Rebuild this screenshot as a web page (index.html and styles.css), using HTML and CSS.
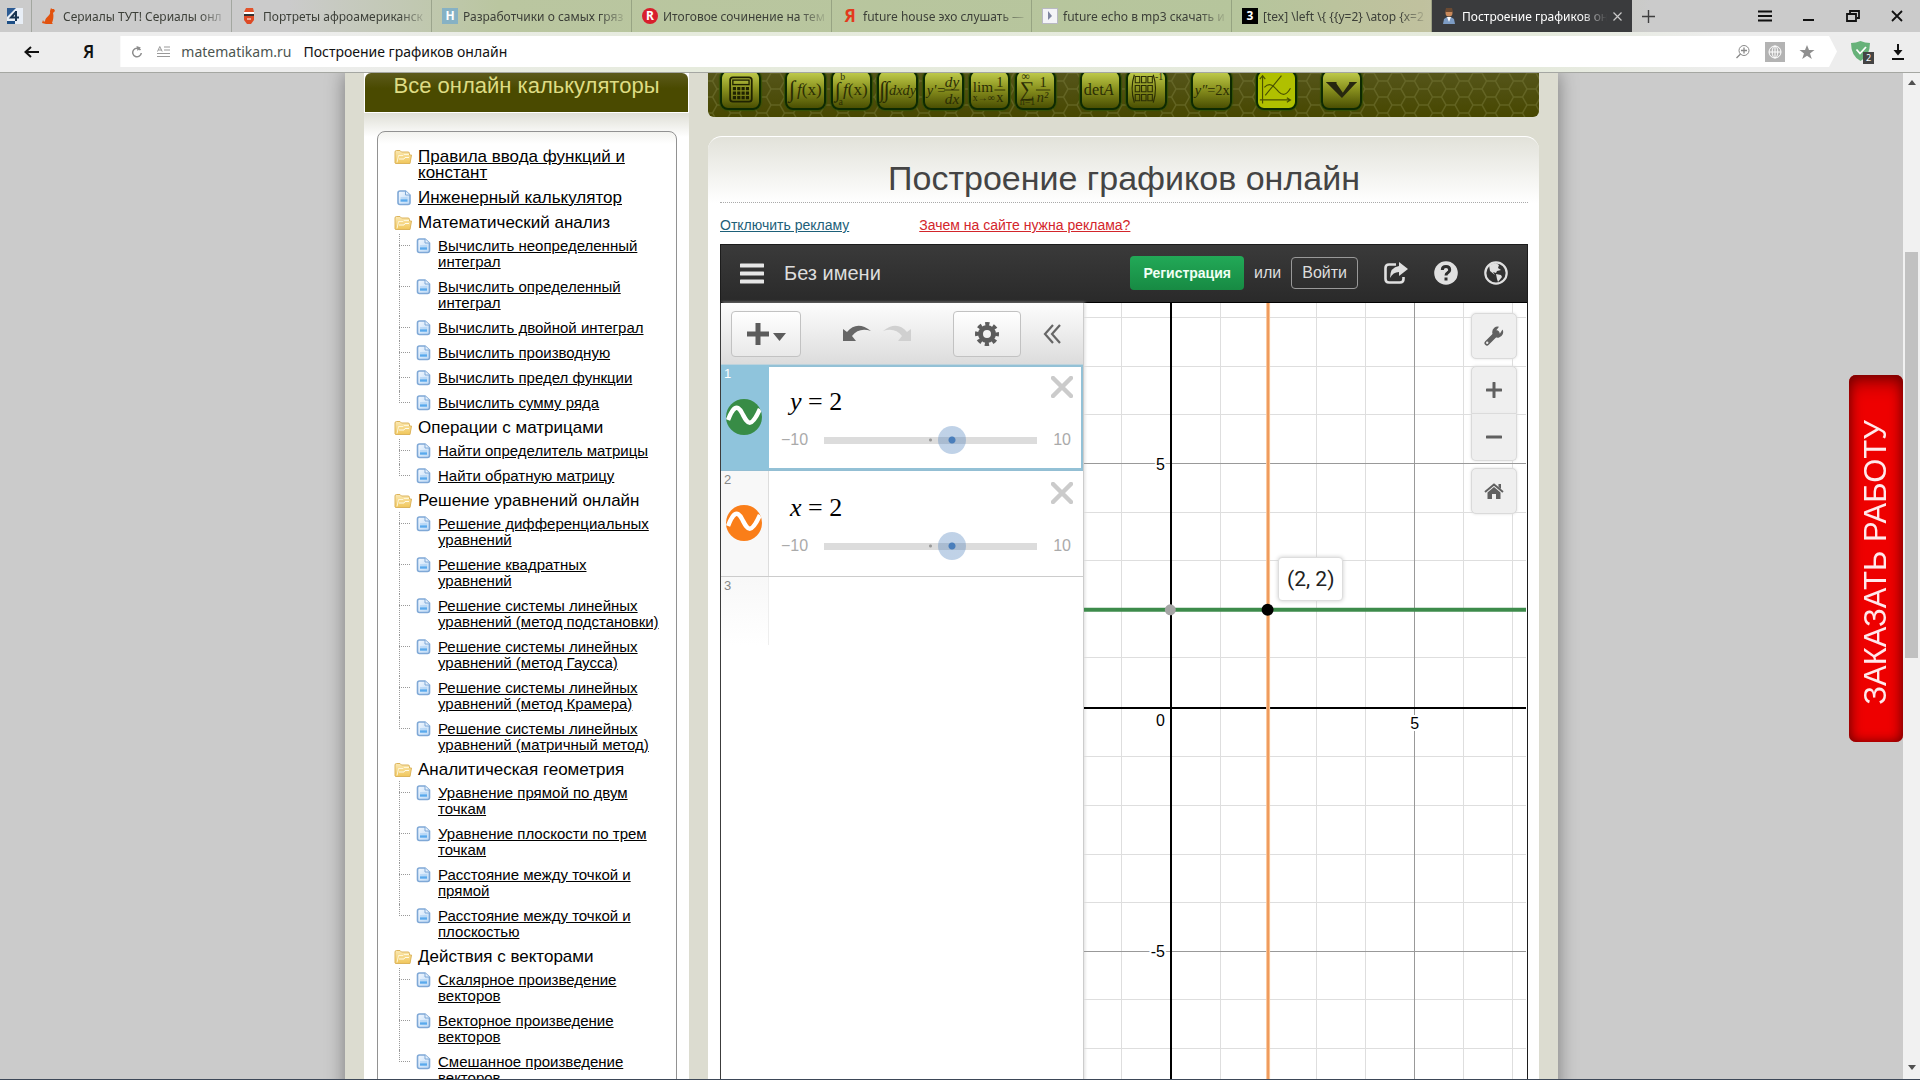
FILE: index.html
```html
<!DOCTYPE html>
<html lang="ru">
<head>
<meta charset="utf-8">
<title>Построение графиков онлайн</title>
<link rel="stylesheet" href="styles.css">
</head>
<body>
<svg class="defs" aria-hidden="true">
  <defs>
    <linearGradient id="gFolder" x1="0" y1="0" x2="0" y2="1"><stop offset="0" stop-color="#fbe9b4"/><stop offset="1" stop-color="#f0c65a"/></linearGradient>
    <linearGradient id="gDoc" x1="0" y1="0" x2="1" y2="1"><stop offset="0" stop-color="#f4f9ff"/><stop offset="1" stop-color="#bcd9f6"/></linearGradient>
    <symbol id="folder" viewBox="0 0 18 16"><path d="M1 14V3q0-1.500 1.500-1.500H6L7.500 3H14q1.500 0 1.500 1.500V6H17.500L16 14.500H1.500z" fill="url(#gFolder)" stroke="#dcb45c"/><path d="M3 13.500 4.500 6.500H9L10 5.500H15" fill="none" stroke="#fff6d8"/><path d="M5 10h5l1-1.500h4" fill="none" stroke="#fffbe9"/></symbol>
    <symbol id="doc" viewBox="0 0 15 16"><path d="M1.500 3q0-2 2-2H9l4.500 4v7.500q0 2-2 2h-8q-2 0-2-2z" fill="url(#gDoc)" stroke="#7fa8d6" stroke-width="1.600"/><path d="M9 1v4h4.500" fill="#e6f1fd" stroke="#7fa8d6"/><path d="M4 10.500h7" stroke="#5aa9ec" stroke-width="2.400"/><path d="M4 8h7" stroke="#9dc9f2"/></symbol>
    <symbol id="cross" viewBox="0 0 22 22"><path d="M2 2 20 20M20 2 2 20" stroke="#cbcbcb" stroke-width="4.500" stroke-linecap="round"/></symbol>
    <symbol id="wave" viewBox="0 0 36 36"><path d="M2 21C7 8 11 5 16 14s8 18 18-4" fill="none" stroke="#fff" stroke-width="4.500"/></symbol>
  </defs>
</svg>

<header class="browser">
  <nav class="tabs">
    <a class="tab pinned" href="#"><svg width="16" height="16" viewBox="0 0 16 16"><rect width="16" height="16" fill="#e8eef6"/><path d="M0 0h9L0 9z" fill="#2c5b93"/><path d="M0 16V13h8v3z" fill="#1d4f86"/><path d="M9 3v10M9 4 4 9.500h8" fill="none" stroke="#17324f" stroke-width="2"/></svg></a>
    <a class="tab" href="#"><svg width="14" height="16" viewBox="0 0 14 16"><path d="M9 0l1 1 2 0 1 2-2 2c1 3 0 8-1 10l1 1H4L0 15l1-3 1 2 1-1C4 8 9 8 8 3z" fill="#e2520e"/></svg><span>Сериалы ТУТ! Сериалы онл</span></a>
    <a class="tab" href="#"><svg width="14" height="16" viewBox="0 0 14 16"><path d="M2 4 4 0h7l1 4z" fill="#e2532b"/><path d="M2 4h10v3H2z" fill="#fff"/><path d="M2 6h10v2H2z" fill="#333"/><path d="M2 8h10v4l-3 4H5l-3-4z" fill="#dd4a25"/><path d="M5 11h4" stroke="#fff"/></svg><span>Портреты афроамериканск</span></a>
    <a class="tab" href="#"><b class="fav habr">H</b><span>Разработчики о самых гряз</span></a>
    <a class="tab" href="#"><b class="fav red">R</b><span>Итоговое сочинение на тем</span></a>
    <a class="tab" href="#"><b class="fav ya">Я</b><span>future house эхо слушать —</span></a>
    <a class="tab" href="#"><svg class="sq" width="16" height="16" viewBox="0 0 16 16"><rect x=".5" y=".5" width="15" height="15" fill="#f4f4f8" stroke="#b9b9c4"/><path d="M6 3l4 5-4 4z" fill="#7f86a0"/></svg><span>future echo в mp3 скачать и</span></a>
    <a class="tab" href="#"><b class="fav three">3</b><span>[tex] \left \{ {{y=2} \atop {x=2</span></a>
    <a class="tab active" href="#"><svg width="14" height="16" viewBox="0 0 14 16"><circle cx="7" cy="5" r="3.500" fill="#c98a5c"/><path d="M3 4 4 0h6l1 4z" fill="#6b4a32"/><path d="M1 16l1-5 3-2h4l3 2 1 5z" fill="#7d9cc4"/><path d="M5 9l2 5 2-5z" fill="#fff"/></svg><span>Построение графиков он</span><svg class="tabx" width="9" height="9" viewBox="0 0 9 9"><path d="M.5.5l8 8M8.500.5l-8 8" stroke="#c9c9c9" stroke-width="1.200"/></svg></a>
    <button class="bare plus" aria-label="Новая вкладка"><svg width="13" height="13" viewBox="0 0 13 13"><path d="M6.500 0v13M0 6.500h13" stroke="#3f3f3f" stroke-width="1.400"/></svg></button>
    <div class="winbtns">
      <button class="bare" aria-label="Меню"><svg width="14" height="12" viewBox="0 0 14 12"><path d="M0 1.500h14M0 6h14M0 10.500h14" stroke="#111" stroke-width="2"/></svg></button>
      <button class="bare" aria-label="Свернуть"><svg width="14" height="12" viewBox="0 0 14 12"><path d="M1 10h11" stroke="#111" stroke-width="2"/></svg></button>
      <button class="bare" aria-label="Развернуть"><svg width="14" height="12" viewBox="0 0 14 12"><path d="M4 3V1h9v7h-2M1 4h9v7H1z" fill="none" stroke="#111" stroke-width="1.800"/></svg></button>
      <button class="bare" aria-label="Закрыть"><svg width="14" height="12" viewBox="0 0 14 12"><path d="M2 1l10 10M12 1 2 11" stroke="#111" stroke-width="1.800"/></svg></button>
    </div>
  </nav>
  <div class="address">
    <button class="bare back" aria-label="Назад"><svg width="15" height="12" viewBox="0 0 15 12"><path d="M15 6H2M7 1 1.500 6 7 11" fill="none" stroke="#111" stroke-width="2"/></svg></button>
    <a class="yandex" href="#">Я</a>
    <div class="omni">
      <svg width="12" height="12" viewBox="0 0 12 12"><path d="M9.500 4A4.300 4.300 0 1 0 10.300 7" fill="none" stroke="#8c8c8c" stroke-width="1.500"/><path d="M5.500 0 9.800 1.500 6.500 5z" fill="#8c8c8c"/></svg>
      <svg width="14" height="12" viewBox="0 0 14 12"><path d="M7 1h6M7 4h6M0 7.500h13M0 10.500h13" stroke="#999"/><path d="M.5 5.500 2.800.5 5.200 5.500M1.500 4h3" fill="none" stroke="#999"/></svg>
      <span class="host">matematikam.ru</span><span class="ptitle">Построение графиков онлайн</span>
      <svg class="push" width="16" height="14" viewBox="0 0 16 14"><circle cx="9" cy="5.500" r="5" fill="none" stroke="#888"/><path d="M5.500 9 1.500 13M9 2.500v6M6 5.500h6" stroke="#888" stroke-width="1.300"/></svg>
      <svg width="20" height="20" viewBox="0 0 20 20"><rect width="20" height="20" fill="#b3b3b3"/><g fill="none" stroke="#fff"><circle cx="10" cy="10" r="6"/><ellipse cx="10" cy="10" rx="2.800" ry="6"/><path d="M4 10h12M10 4v12"/></g></svg>
      <svg width="16" height="14" viewBox="0 0 16 14"><path d="M8 0l2 5h5.500L11 8.500 12.800 14 8 10.800 3.200 14 5 8.500.5 5H6z" fill="#8f8f8f"/></svg>
    </div>
    <div class="shield"><svg width="23" height="21" viewBox="0 0 23 21"><path d="M0 2q5 0 9.500-2Q14 2 19 2q0 13-9.500 18Q0 15 0 2z" fill="#67b279"/><path d="M5.500 8.500 9 12.500 15 6" fill="none" stroke="#fff" stroke-width="1.800"/></svg><span>2</span></div>
    <svg width="12" height="16" viewBox="0 0 12 16"><path d="M6 0v9M0 15h12" stroke="#111" stroke-width="2"/><path d="M1.500 6h9L6 11.500z" fill="#111"/></svg>
  </div>
</header>

<div class="viewport">
<div class="page">
  <div class="site">
    <aside class="side">
      <h2>Все онлайн калькуляторы</h2>
      <div class="sidebody">
      <ul class="tree">
        <li><svg><use href="#folder"/></svg><a href="#">Правила ввода функций и констант</a></li>
        <li><svg class="d"><use href="#doc"/></svg><a href="#">Инженерный калькулятор</a></li>
        <li><svg><use href="#folder"/></svg><span>Математический анализ</span>
          <ul>
            <li><svg><use href="#doc"/></svg><a href="#">Вычислить неопределенный интеграл</a></li>
            <li><svg><use href="#doc"/></svg><a href="#">Вычислить определенный интеграл</a></li>
            <li><svg><use href="#doc"/></svg><a href="#">Вычислить двойной интеграл</a></li>
            <li><svg><use href="#doc"/></svg><a href="#">Вычислить производную</a></li>
            <li><svg><use href="#doc"/></svg><a href="#">Вычислить предел функции</a></li>
            <li><svg><use href="#doc"/></svg><a href="#">Вычислить сумму ряда</a></li>
          </ul></li>
        <li><svg><use href="#folder"/></svg><span>Операции с матрицами</span>
          <ul>
            <li><svg><use href="#doc"/></svg><a href="#">Найти определитель матрицы</a></li>
            <li><svg><use href="#doc"/></svg><a href="#">Найти обратную матрицу</a></li>
          </ul></li>
        <li><svg><use href="#folder"/></svg><span>Решение уравнений онлайн</span>
          <ul>
            <li><svg><use href="#doc"/></svg><a href="#">Решение дифференциальных уравнений</a></li>
            <li><svg><use href="#doc"/></svg><a href="#">Решение квадратных уравнений</a></li>
            <li><svg><use href="#doc"/></svg><a href="#">Решение системы линейных уравнений (метод подстановки)</a></li>
            <li><svg><use href="#doc"/></svg><a href="#">Решение системы линейных уравнений (метод Гаусса)</a></li>
            <li><svg><use href="#doc"/></svg><a href="#">Решение системы линейных уравнений (метод Крамера)</a></li>
            <li><svg><use href="#doc"/></svg><a href="#">Решение системы линейных уравнений (матричный метод)</a></li>
          </ul></li>
        <li><svg><use href="#folder"/></svg><span>Аналитическая геометрия</span>
          <ul>
            <li><svg><use href="#doc"/></svg><a href="#">Уравнение прямой по двум точкам</a></li>
            <li><svg><use href="#doc"/></svg><a href="#">Уравнение плоскости по трем точкам</a></li>
            <li><svg><use href="#doc"/></svg><a href="#">Расстояние между точкой и прямой</a></li>
            <li><svg><use href="#doc"/></svg><a href="#">Расстояние между точкой и плоскостью</a></li>
          </ul></li>
        <li><svg><use href="#folder"/></svg><span>Действия с векторами</span>
          <ul>
            <li><svg><use href="#doc"/></svg><a href="#">Скалярное произведение векторов</a></li>
            <li><svg><use href="#doc"/></svg><a href="#">Векторное произведение векторов</a></li>
            <li><svg><use href="#doc"/></svg><a href="#">Смешанное произведение векторов</a></li>
          </ul></li>
      </ul>
      </div>
    </aside>

    <main class="main">
      <nav class="calcbar">
        <div class="grp"><a href="#" aria-label="Калькулятор"><svg viewBox="0 0 41 40"><rect x="9" y="6" width="24" height="27" rx="3" fill="none" stroke="#1f2200" stroke-width="2"/><rect x="12" y="9" width="18" height="5" fill="none" stroke="#1f2200" stroke-width="1.500"/><path d="M12 18.500h18M12 23.500h18M12 28.500h18" stroke="#1f2200" stroke-width="3.500" stroke-dasharray="3.500 1.330"/></svg></a></div>
        <div class="grp">
          <a href="#"><svg viewBox="0 0 41 40"><text x="2" y="28" font-size="26">∫</text><text x="11" y="26" font-size="19"><tspan class="i">f</tspan>(x)</text></svg></a>
          <a href="#"><svg viewBox="0 0 41 40"><text x="2" y="28" font-size="24">∫</text><text x="11" y="26" font-size="19"><tspan class="i">f</tspan>(x)</text><text x="8" y="9" font-size="11">b</text><text x="6" y="37" font-size="11">a</text></svg></a>
          <a href="#"><svg viewBox="0 0 41 40"><text x="0" y="28" font-size="25">∫</text><text x="5" y="28" font-size="25">∫</text><text class="i" x="11" y="26" font-size="16">dxdy</text></svg></a>
          <a href="#"><svg viewBox="0 0 41 40"><text class="i" x="2" y="25" font-size="16">y'=</text><text class="i" x="22" y="17" font-size="17">dy</text><text class="i" x="22" y="35" font-size="17">dx</text><path d="M21 20h17" stroke="#2b2e04"/></svg></a>
          <a href="#"><svg viewBox="0 0 41 40"><text x="2" y="22" font-size="17">lim</text><text x="2" y="32" font-size="11">x→∞</text><text x="28" y="17" font-size="16">1</text><text x="28" y="33" font-size="16">x</text><path d="M26 20h12" stroke="#2b2e04"/></svg></a>
          <a href="#"><svg viewBox="0 0 41 40"><text x="3" y="27" font-size="23">∑</text><text x="5" y="9" font-size="13">∞</text><text x="3" y="37" font-size="11">n=1</text><text x="25" y="17" font-size="16">1</text><text class="i" x="22" y="33" font-size="16">n²</text><path d="M21 20h16" stroke="#2b2e04"/></svg></a>
        </div>
        <div class="grp">
          <a href="#"><svg viewBox="0 0 41 40"><text x="2" y="26" font-size="18">det<tspan class="i">A</tspan></text></svg></a>
          <a href="#"><svg viewBox="0 0 41 40"><path d="M7 3q-5 15 0 31M28 3q5 15 0 31" fill="none" stroke="#2b2e04" stroke-width="1.300"/><g fill="none" stroke="#2b2e04" stroke-width="1.200"><path d="M8 5h5v7H8zM15 5h5v7h-5zM22 5h5v7h-5zM8 15h5v7H8zM15 15h5v7h-5zM22 15h5v7h-5zM8 25h5v7H8zM15 25h5v7h-5zM22 25h5v7h-5z"/></g><text x="30" y="9" font-size="11">-1</text></svg></a>
        </div>
        <div class="grp"><a href="#"><svg viewBox="0 0 41 40"><text x="2" y="26" font-size="16"><tspan class="i">y″</tspan>=2x</text></svg></a></div>
        <div class="grp"><a class="on" href="#" aria-label="Графики"><svg viewBox="0 0 41 40"><path d="M5 35V4M2 31h34M2 8l3-4 3 4M32 28.500l4 2.500-4 2.500M7 17c7-7 11 0 16 5s9 3 13-4M8 26 26 4" fill="none" stroke="#4a5200" stroke-width="1.300"/></svg></a></div>
        <div class="grp"><a href="#" aria-label="Ещё"><svg viewBox="0 0 41 40"><path d="M3 11h12v2l7 10 7-10v-2h9L35 14 21 29 6 14z" fill="#27270f"/></svg></a></div>
      </nav>

      <section class="panel">
        <h1>Построение графиков онлайн</h1>
        <p class="ads"><a class="off" href="#">Отключить рекламу</a><a class="why" href="#">Зачем на сайте нужна реклама?</a></p>

        <div class="desmos">
          <header class="dhead">
            <button class="bare" aria-label="Меню"><svg width="24" height="21" viewBox="0 0 24 21"><path d="M1 2.500h22M1 10.500h22M1 18.500h22" stroke="#e6e6e6" stroke-width="4" stroke-linecap="round"/></svg></button>
            <span class="name">Без имени</span>
            <button class="reg">Регистрация</button>
            <span class="or">или</span>
            <button class="login">Войти</button>
            <div class="dicons">
            <button class="bare" aria-label="Поделиться"><svg width="24" height="22" viewBox="0 0 24 22"><path d="M12 2.500H5q-3.500 0-3.500 3.500v11q0 3.500 3.500 3.500h11q3.500 0 3.500-3.500V15" fill="none" stroke="#e0e0e0" stroke-width="2.600"/><path d="M15 0l9 7-9 7V10q-6 0-9 6 0-11 9-12z" fill="#e0e0e0"/></svg></button>
            <button class="bare" aria-label="Справка"><svg width="24" height="24" viewBox="0 0 24 24"><circle cx="12" cy="12" r="11.800" fill="#e0e0e0"/><path d="M8.300 9q0-3.500 3.700-3.500T15.700 9q0 1.500-2 2.800Q12 12.800 12 14.500M12 16.500v3" fill="none" stroke="#2e2e2e" stroke-width="3"/></svg></button>
            <button class="bare" aria-label="Язык"><svg width="24" height="24" viewBox="0 0 24 24"><circle cx="12" cy="12" r="10.700" fill="none" stroke="#e0e0e0" stroke-width="2.200"/><path d="M5 4l7-2 3 2-1 3 3 2-4 1-1 2-3-1 2 3-5-4zM12 13l5 1 1 2-4 5-1-3z" fill="#e0e0e0"/></svg></button>
            </div>
          </header>
          <div class="dbody">
            <div class="exprs">
              <div class="etools">
                <button class="box add" aria-label="Добавить"><svg width="40" height="24" viewBox="0 0 40 24"><path d="M12 1v22M1 12h22" stroke="#5c5c5c" stroke-width="5"/><path d="M27 11h13l-6.500 8z" fill="#5c5c5c"/></svg></button>
                <div class="history">
                <button class="bare" aria-label="Отменить"><svg width="28" height="18" viewBox="0 0 28 18"><path d="M0 4l4 3Q14-5 28 6 16 2 9 11l4 5H0z" fill="#666"/></svg></button>
                <button class="bare" aria-label="Повторить"><svg width="28" height="18" viewBox="0 0 28 18"><path d="M28 4l-4 3Q14-5 0 6 12 2 19 11l-4 5h13z" fill="#d0d0d0"/></svg></button>
                </div>
                <button class="box gear" aria-label="Настройки"><svg width="24" height="24" viewBox="0 0 24 24"><circle cx="12" cy="12" r="6.500" fill="none" stroke="#5c5c5c" stroke-width="5"/><circle cx="12" cy="12" r="10" fill="none" stroke="#5c5c5c" stroke-width="4" stroke-dasharray="4.200 3.654" stroke-dashoffset="2.100"/></svg></button>
                <button class="bare" aria-label="Скрыть"><svg width="18" height="20" viewBox="0 0 18 20"><path d="M10 1 2 10l8 9M17 1 9 10l8 9" fill="none" stroke="#666" stroke-width="2.200"/></svg></button>
              </div>
              <div class="expr sel">
                <div class="num">1<button class="bare dot green" aria-label="Показать y"><svg width="36" height="36"><use href="#wave"/></svg></button></div>
                <div class="cell">
                  <div class="eq"><span><i>y</i> = 2</span><button class="bare" aria-label="Удалить"><svg width="22" height="22"><use href="#cross"/></svg></button></div>
                  <label class="slide"><span>−10</span><input type="range" min="-10" max="10" value="2" aria-label="y"><span>10</span></label>
                </div>
              </div>
              <div class="expr">
                <div class="num">2<button class="bare dot orange" aria-label="Показать x"><svg width="36" height="36"><use href="#wave"/></svg></button></div>
                <div class="cell">
                  <div class="eq"><span><i>x</i> = 2</span><button class="bare" aria-label="Удалить"><svg width="22" height="22"><use href="#cross"/></svg></button></div>
                  <label class="slide"><span>−10</span><input type="range" min="-10" max="10" value="2" aria-label="x"><span>10</span></label>
                </div>
              </div>
              <div class="expr next"><div class="num">3</div></div>
            </div>
            <div class="graph">
              <svg viewBox="1084 303 443 780">
                <g fill="none" stroke-width="1" shape-rendering="crispEdges">
                  <path stroke="#dedede" d="M1121.500 303v780M1220.500 303v780M1317.500 303v780M1366.500 303v780M1464.500 303v780M1513.500 303v780M1084 317.500h443M1084 366.500h443M1084 414.500h443M1084 512.500h443M1084 561.500h443M1084 658.500h443M1084 757.500h443M1084 806.500h443M1084 855.500h443M1084 903.500h443M1084 1001.500h443M1084 1050.500h443"/>
                  <path stroke="#999" d="M1415.500 303v780M1084 463.500h443M1084 952.500h443"/>
                  <path stroke="#000" stroke-width="2" d="M1171 303v780M1084 709h443"/>
                </g>
                <g class="labels"><text x="1165" y="470">5</text><text x="1165" y="727">0</text><text x="1420" y="730">5</text><text x="1165" y="958">-5</text></g>
                <path d="M1268.500 303v780" stroke="#fbc79a" stroke-width="4"/><path d="M1268.500 303v780" stroke="#ee9a5c" stroke-width="2"/>
                <path d="M1084 610.500h443" stroke="#3d8b4b" stroke-width="4"/>
                <circle cx="1170.500" cy="610.500" r="5.500" fill="#a5a5a5"/><circle cx="1268" cy="610.500" r="6" fill="#000"/>
              </svg>
              <output class="coord">(2, 2)</output>
              <div class="gtools">
                <button aria-label="Параметры графика"><svg width="20" height="20" viewBox="0 0 20 20"><path d="M3 17 13 7" stroke="#606060" stroke-width="5" stroke-linecap="round"/><path d="M18.500 3.500A5.500 5.500 0 1 1 15 .8L12.500 4l.5 3 3 .5z" fill="#606060"/><circle cx="3.200" cy="16.800" r="1.200" fill="#eee"/></svg></button>
                <div class="zoom"><button aria-label="Увеличить"><svg width="16" height="16" viewBox="0 0 16 16"><path d="M8 1v14M1 8h14" stroke="#606060" stroke-width="3" stroke-linecap="round"/></svg></button><button aria-label="Уменьшить"><svg width="16" height="16" viewBox="0 0 16 16"><path d="M1 8h14" stroke="#606060" stroke-width="3" stroke-linecap="round"/></svg></button></div>
                <button aria-label="Исходный вид"><svg width="20" height="17" viewBox="0 0 20 17"><path d="M1 9 10 1.500 19 9" fill="none" stroke="#606060" stroke-width="2"/><path d="M14.500 1H17v5l-2.500-2zM3.500 9.500 10 4l6.500 5.500V16H12v-5H8v5H3.500z" fill="#606060"/></svg></button>
              </div>
            </div>
          </div>
        </div>
      </section>
    </main>
  </div>
  <a class="order" href="#"><span>ЗАКАЗАТЬ РАБОТУ</span></a>
</div>
<div class="scroll" aria-hidden="true"><i class="up"></i><i class="thumb"></i><i class="down"></i></div>
</div>
</body>
</html>
```
FILE: styles.css
```css
* { box-sizing: border-box; }
body { margin: 0; height: 100vh; display: flex; flex-direction: column; overflow: hidden; font-family: "Liberation Sans", Arial, sans-serif; border-bottom: 1px solid #3d4858; }
.defs { position: absolute; width: 0; height: 0; }
svg { display: block; flex: none; }
.bare { padding: 0; border: 0; background: none; display: block; }

/* browser chrome */
.browser { flex: none; font-family: "Noto Sans", "Open Sans", sans-serif; border-bottom: 1px solid #a5a7a2; background: linear-gradient(90deg, #ededed 15%, #e6ebdd 35%, #e5eadc 80%, #ededed 90%); }
.tabs { display: flex; height: 32px; background: linear-gradient(90deg, #cbcbcb 15%, #bac6a0 26%, #b6c59c 65%, #c0c19e 74%, #cbcbcb 86%); }
.tab { flex: 0 1 200px; min-width: 0; display: flex; align-items: center; gap: 7px; padding: 0 2px 0 10px; border-right: 1px solid rgba(90, 100, 80, .35); color: #3c3f38; font-size: 12px; text-decoration: none; }
.tab.pinned { flex: 0 0 32px; padding: 0 7px; }
.tab > span { flex: 1; overflow: hidden; white-space: nowrap; mask-image: linear-gradient(90deg, #000 82%, transparent); }
.tab.active { padding-right: 10px; background: #3a3b3d; color: #fff; border: 0; gap: 6px; }
.fav { width: 16px; height: 16px; margin-right: -2px; font-size: 12px; line-height: 16px; text-align: center; color: #fff; }
.sq { margin-right: -2px; }
.habr { background: #86b1c4; }
.red { background: #d81e2c; border-radius: 8px; }
.ya { color: #e3391c; font-size: 17px; }
.three { background: #000; }
.plus { margin: 0 10px; }
.winbtns { display: flex; align-items: center; gap: 30px; margin-left: auto; padding-right: 16px; }
.address { display: flex; align-items: center; height: 40px; padding: 0 16px 1px 24px; }
.yandex { margin: 0 26px 0 44px; color: #111; font-size: 17px; font-weight: 600; text-decoration: none; }
.omni { flex: 1; display: flex; align-items: center; height: 31px; margin-right: 14px; padding: 0 22px 0 11px; gap: 14px; background: #fff; clip-path: polygon(0 0, calc(100% - 8px) 0, 100% 50%, calc(100% - 8px) 100%, 0 100%); font-size: 14px; }
.host { margin: 0 -2px 0 -4px; color: #4c5550; }
.ptitle { color: #111; }
.omni .push { margin-left: auto; }
.shield { position: relative; margin-right: 18px; }
.shield span { position: absolute; right: 0; bottom: -2px; width: 11px; height: 12px; background: #444; color: #fff; font-size: 9px; line-height: 12px; text-align: center; }

/* page */
.viewport { flex: 1; min-height: 0; display: flex; }
.page { flex: 1; position: relative; overflow: hidden; background: #cbcbcb; }
.site { width: 100%; max-width: 1213px; min-height: 100%; margin: 0 auto; padding: 0 19px; display: flex; gap: 19px; background: #dcdcd0; box-shadow: 0 0 18px rgba(0, 0, 0, .4); }
.side { flex: 0 0 325px; background: #fff; }
.side h2 { margin: 0 1px; height: 39px; padding-bottom: 13px; border-radius: 6px 6px 0 0; background: linear-gradient(#5c5a1c, #4a4a00 40%); color: #dedc84; font-size: 22px; line-height: 26px; font-weight: 400; text-align: center; }
.sidebody { padding: 18px 12px 0 13px; border-top: 1px solid #fff; background: linear-gradient(#dfdfd6, #fff 24px); }
.tree { margin: 0; padding: 17px 14px 20px 16px; border: 1px solid #929292; border-radius: 8px; background: linear-gradient(#f3f3ef, #fff 12px); font-size: 17px; line-height: 16px; list-style: none; }
.tree a { color: #000; }
.tree > li { display: grid; grid-template-columns: 24px 1fr; margin-bottom: 9px; }
.tree > li > svg { width: 18px; height: 16px; }
.tree > li > svg.d { margin-left: 1px; }
.tree ul { grid-column: 1 / -1; margin: 7px 0 0 5px; padding: 0; list-style: none; font-size: 15px; }
.tree ul li { position: relative; display: flex; gap: 7px; padding: 0 0 9px 17px; }
.tree ul svg { width: 15px; height: 16px; }
.tree ul li::before { content: ""; position: absolute; left: 0; top: -4px; bottom: 4px; border-left: 1px dotted #999; }
.tree ul li::after { content: ""; position: absolute; left: 0; top: 7px; width: 11px; border-top: 1px dotted #999; }
.tree ul li:last-child { padding-bottom: 0; }
.tree ul li:last-child::before { bottom: auto; height: 12px; }

.main { flex: 1; min-width: 0; display: flex; flex-direction: column; }
.calcbar { display: flex; align-items: flex-end; gap: 24px; height: 44px; padding: 0 12px 7px; overflow: hidden; border-radius: 0 0 6px 6px; background: url("data:image/svg+xml,%3Csvg xmlns='http://www.w3.org/2000/svg' width='27' height='16'%3E%3Cpath d='M0 8h4.500L9 0h9l4.500 8H27M4.500 8 9 16h9l4.500-8' fill='none' stroke='%23777a3a' stroke-opacity='.5' stroke-width='1.500'/%3E%3C/svg%3E"), linear-gradient(#55551a, #474700); }
.grp { display: flex; gap: 5px; }
.grp a { width: 41px; height: 40px; border: 2px solid #0d2a02; border-radius: 8px; background: linear-gradient(#c0cc4c, #8c9420 45%, #4a4e02); box-shadow: 0 0 1px 1px #355006; }
.grp a.on { background: #b0c000; }
.grp svg { width: 37px; height: 36px; }
.grp text { font-family: "Liberation Serif", "DejaVu Serif", serif; fill: #2b2e04; }
.grp .i { font-style: italic; }

.panel { flex: 1; margin-top: 19px; padding: 0 11px 0 12px; border-top: 1px solid #fff; border-radius: 14px 14px 0 0; background: linear-gradient(#e2e2da, #fff 66px); }
h1 { margin: 0; padding: 18px 0 1px; border-bottom: 1px dotted #aaa; color: #444; font-size: 34px; line-height: 46px; font-weight: 400; text-align: center; }
.ads { display: flex; gap: 70px; margin: 0; padding: 14px 0 10px; font-size: 14px; line-height: 17px; }
.off { color: #1d6079; }
.why { color: #d3252b; }

/* graphing calculator */
.desmos { border: solid #1c1c1c; border-width: 1px 1px 0; background: #fff; }
.dhead { display: flex; align-items: center; height: 58px; padding: 0 19px 1px; background: linear-gradient(#3a3a3a, #2a2a2a); border-bottom: 1px solid #000; color: #ddd; font-size: 16px; }
.name { margin: 0 auto 0 20px; font-size: 20px; }
.reg, .login { border-radius: 4px; font: inherit; }
.reg { height: 34px; padding: 0 13px; border: 0; background: linear-gradient(#22a957, #178a43); color: #f0fff4; font-size: 14px; font-weight: 700; }
.or { margin: 0 10px; }
.login { height: 32px; padding: 0 10px; border: 1px solid #999; background: none; color: #ddd; }
.dicons { display: flex; align-items: center; gap: 26px; margin-left: 26px; }
.dbody { display: flex; }
.exprs { flex: 0 0 363px; border-right: 1px solid #ccc; box-shadow: 1px 0 3px #ddd; }
.etools { display: flex; align-items: center; justify-content: space-between; height: 62px; padding: 0 22px 0 10px; border-bottom: 1px solid #bdd3dd; background: linear-gradient(#fdfdfd, #dcdcdc); }
.box { display: grid; place-items: center; width: 68px; height: 46px; padding: 0; border: 1px solid #c2c2c2; border-radius: 4px; background: linear-gradient(#fff, #e9e9e9); }
.add { width: 70px; }
.history { display: flex; gap: 12px; margin: 0 20px; }
.expr { display: flex; height: 106px; border-bottom: 1px solid #ccc; }
.num { width: 48px; flex: none; padding: 1px 5px 0 3px; background: #f8f8f8; border-right: 1px solid #ddd; color: #888; font-size: 13px; line-height: 15px; }
.dot { width: 36px; height: 36px; margin: 18px 0 0 2px; border-radius: 50%; overflow: hidden; }
.green { background: #388c46; }
.orange { background: #fa7e19; }
.sel { border-color: #93bed3; }
.sel .num { background: #8fc4dc; border-color: #8fc4dc; color: #fff; }
.cell { flex: 1; padding: 8px 10px 0 12px; }
.sel .cell { border: 2px solid #93c1d6; border-left: 0; padding: 6px 8px 0 12px; }
.eq { display: flex; justify-content: space-between; align-items: flex-start; height: 53px; padding-left: 9px; font-family: "Liberation Serif", "Times New Roman", serif; font-size: 26px; line-height: 58px; }
.eq button { margin-top: 3px; }
.slide { display: flex; align-items: center; justify-content: space-between; height: 28px; padding-right: 2px; color: #aaa; font-size: 16px; }
.slide input { appearance: none; width: 241px; height: 28px; margin: 0 -14px; background: radial-gradient(circle at 50% 50%, #999 1px, transparent 2px), linear-gradient(#dcdcdc, #dcdcdc) center / 213px 7px no-repeat; }
.slide input::-webkit-slider-thumb { appearance: none; width: 28px; height: 28px; border-radius: 50%; background: radial-gradient(circle, #4a7ebb 3px, rgba(74, 126, 187, .35) 4px); }
.next { border: 0; }
.next .num { height: 68px; background: linear-gradient(#f8f8f8, #fff); border-right: 1px solid #eee; }
.graph { flex: 1; position: relative; min-width: 0; padding-right: 1px; }
.graph > svg { width: 100%; height: auto; }
.labels text { font-size: 16px; text-anchor: end; fill: #000; stroke: #fff; stroke-width: 4px; paint-order: stroke; }
.coord { position: absolute; left: 194px; top: 254px; padding: 0 8px; border: 1px solid #ddd; border-radius: 4px; background: #fff; box-shadow: 0 0 4px #ccc; color: #222; font-family: Roboto, sans-serif; font-size: 21px; line-height: 42px; }
.gtools { position: absolute; right: 10px; top: 10px; display: grid; gap: 7px; }
.gtools button { display: grid; place-items: center; width: 46px; height: 46px; padding: 0; border: 1px solid #dadada; border-radius: 5px; background: #efefef; box-shadow: 0 0 3px #ddd; }
.zoom button:first-child { height: 48px; border-radius: 5px 5px 0 0; }
.zoom button:last-child { height: 47px; border-top: 0; border-radius: 0 0 5px 5px; }

.order { position: absolute; right: 0; top: 302px; width: 54px; height: 367px; padding-top: 8px; display: grid; place-items: center; border-radius: 7px; background: #ee0000; box-shadow: inset 0 0 12px #6a0000, inset 0 12px 18px -4px #900; color: #ffe9ec; font-size: 31px; text-decoration: none; }
.order span { writing-mode: vertical-rl; rotate: 180deg; white-space: nowrap; }
.scroll { flex: 0 0 17px; padding: 7px 2px 9px; display: flex; flex-direction: column; align-items: center; background: #f1f1f1; }
.up, .down { border: 4px solid transparent; }
.up { border-top: 0; border-bottom: 5px solid #505050; }
.down { border-bottom: 0; border-top: 5px solid #505050; margin-top: auto; }
.thumb { width: 13px; height: 41%; margin-top: 167px; background: #c1c1c1; }
```
